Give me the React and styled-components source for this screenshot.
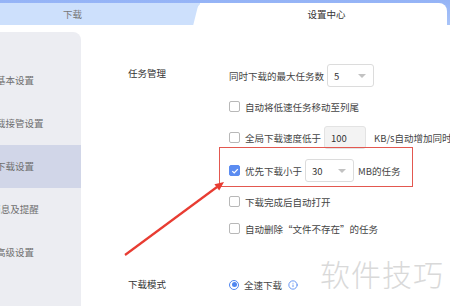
import React from 'react'
import styled, { createGlobalStyle } from 'styled-components'
import { Info } from 'lucide-react'

const GlobalStyle = createGlobalStyle`
  html, body {
    margin: 0;
    padding: 0;
    background: #fff;
    overflow: hidden;
  }
  body {
    font-family: "Noto Sans CJK SC", "Noto Sans", sans-serif;
  }
`

const Screen = styled.div`
  position: relative;
  width: 450px;
  height: 306px;
  overflow: hidden;
`

// the settings window is wider than the capture, its left part is cut off
const Window = styled.div`
  width: 501px;
  margin-left: -51px;
  height: 306px;
  display: flex;
  flex-direction: column;
`

const TabBar = styled.div`
  height: 25px;
  flex: none;
  display: flex;
  align-items: flex-end;
  background: linear-gradient(#94b3f6, #a9c4f8);
`

const Tab = styled.div`
  position: relative;
  height: 22px;
  display: flex;
  align-items: center;
  justify-content: center;
  font-size: 9.5px;
  color: ${p => (p.$active ? '#333' : '#777')};
  background: ${p => (p.$active ? '#fff' : '#cde0fc')};
  ${p => (p.$active
    ? `
    flex: 1;
    margin-right: 3px;
    border-top-right-radius: 8px;
    &::before {
      content: '';
      position: absolute;
      left: -4px;
      top: 0;
      bottom: 0;
      width: 20px;
      background: #fff;
      transform: skewX(-14deg);
      border-top-left-radius: 5px;
    }
    span { position: relative; margin-left: 6px; }
  `
    : `
    width: 251px;
    flex: none;
    border-top-left-radius: 8px;
    span { margin-right: 4px; }
  `)}
`

const Main = styled.div`
  flex: 1;
  display: flex;
  padding-top: 7px;
  background: #fff;
  min-height: 0;
`

const Sidebar = styled.div`
  flex: none;
  width: 132px;
  background: #ecedf2;
  border-top-right-radius: 8px;
  padding-top: 27px;
`

const NavItem = styled.div`
  height: 43px;
  line-height: 43px;
  text-align: center;
  font-size: 9.5px;
  color: #6f6f6f;
  white-space: nowrap;
  background: ${p => (p.$active ? '#d1d6e8' : 'transparent')};
`

const Content = styled.div`
  flex: 1;
  min-width: 0;
  overflow: hidden;
  padding: 28px 0 0 47px;
`

const Section = styled.div`
  display: grid;
  grid-template-columns: 100px 1fr;
  padding-top: ${p => p.$gap || 0}px;
`

const Label = styled.div`
  font-size: 9.5px;
  color: #333;
  line-height: 26px;
  white-space: nowrap;
`

const Options = styled.div`
  display: flex;
  flex-direction: column;
  min-width: 0;
`

const Row = styled.div`
  position: relative;
  flex: none;
  height: ${p => p.$h || 31}px;
  display: flex;
  align-items: center;
  gap: 3px;
  padding-left: 1px;
  font-size: 9.5px;
  color: #444;
  white-space: nowrap;
`

const Check = styled.span`
  width: 11px;
  height: 11px;
  box-sizing: border-box;
  border-radius: 2px;
  border: 1px solid ${p => (p.$on ? '#5b8cf1' : '#b8b8b8')};
  background: ${p => (p.$on ? '#5b8cf1' : '#fff')};
  display: flex;
  align-items: center;
  justify-content: center;
  margin-right: 2px;
  flex: none;
`

const Select = styled.div`
  flex: none;
  width: ${p => p.$w}px;
  height: 23px;
  box-sizing: border-box;
  border: 1px solid #dcdcdc;
  border-radius: 3px;
  background: #fff;
  display: flex;
  align-items: center;
  justify-content: space-between;
  padding: 0 7px 0 6px;
  margin-right: 1px;
  font-size: 9.5px;
  color: #333;

  &::after {
    content: '';
    border-left: 4px solid transparent;
    border-right: 4px solid transparent;
    border-top: 4px solid #c2c2c2;
  }
`

const Field = styled.div`
  flex: none;
  width: 42px;
  height: 23px;
  box-sizing: border-box;
  border: 1px solid #e3e3e3;
  border-radius: 3px;
  background: #f3f3f3;
  display: flex;
  align-items: center;
  padding-left: 6px;
  margin-right: 5px;
  font-size: 9.5px;
  color: #333;
`

const Radio = styled.span`
  flex: none;
  width: 10px;
  height: 10px;
  box-sizing: border-box;
  border-radius: 50%;
  border: 1px solid #4f86f0;
  display: flex;
  align-items: center;
  justify-content: center;
  margin-right: 2px;

  &::after {
    content: '';
    width: 5px;
    height: 5px;
    border-radius: 50%;
    background: #4f86f0;
  }
`

const Highlight = styled.div`
  position: absolute;
  left: -9px;
  top: -6px;
  width: 194px;
  height: 40px;
  box-sizing: border-box;
  border: 1.5px solid #e35850;
  pointer-events: none;
`

const Arrow = styled.svg`
  position: absolute;
  left: 0;
  top: 0;
  pointer-events: none;
`

const Watermark = styled.div`
  position: absolute;
  left: 320px;
  top: 251px;
  font-size: 30px;
  font-weight: 300;
  letter-spacing: 1px;
  color: #d9d9d9;
  white-space: nowrap;
`

const Tick = () => (
  <svg width="8" height="8" viewBox="0 0 8 8">
    <path d="M1.3 4.1 L3.2 5.9 L6.8 2.1" fill="none" stroke="#fff" strokeWidth="1.3" />
  </svg>
)

const nav = ['基本设置', '下载接管设置', '下载设置', '消息及提醒', '高级设置']

export default function App() {
  return (
    <>
      <GlobalStyle />
      <Screen>
        <Window>
          <TabBar>
            <Tab><span>下载</span></Tab>
            <Tab $active><span>设置中心</span></Tab>
          </TabBar>
          <Main>
            <Sidebar>
              {nav.map(n => (
                <NavItem key={n} $active={n === '下载设置'}>{n}</NavItem>
              ))}
            </Sidebar>
            <Content>
              <Section>
                <Label>任务管理</Label>
                <Options>
                  <Row>
                    同时下载的最大任务数
                    <Select $w={47}>5</Select>
                  </Row>
                  <Row>
                    <Check />自动将低速任务移动至列尾
                  </Row>
                  <Row>
                    <Check />全局下载速度低于
                    <Field>100</Field>
                    KB/s自动增加同时下载任务数
                  </Row>
                  <Row $h={35}>
                    <Check $on><Tick /></Check>优先下载小于
                    <Select $w={49}>30</Select>
                    MB的任务
                    <Highlight />
                  </Row>
                  <Row $h={27}>
                    <Check />下载完成后自动打开
                  </Row>
                  <Row $h={27}>
                    <Check />自动删除“文件不存在”的任务
                  </Row>
                </Options>
              </Section>
              <Section $gap={29}>
                <Label>下载模式</Label>
                <Options>
                  <Row $h={27}>
                    <Radio />全速下载
                    <Info size={10} color="#4f86f0" strokeWidth={2} style={{ marginLeft: 3 }} />
                  </Row>
                </Options>
              </Section>
            </Content>
          </Main>
        </Window>
        <Arrow width="450" height="306">
          <line x1="125" y1="255" x2="217" y2="187" stroke="#e83c32" strokeWidth="2.2" />
          <polygon points="224,182 219.2,190.6 214.4,184.2" fill="#e83c32" />
        </Arrow>
        <Watermark>软件技巧</Watermark>
      </Screen>
    </>
  )
}
